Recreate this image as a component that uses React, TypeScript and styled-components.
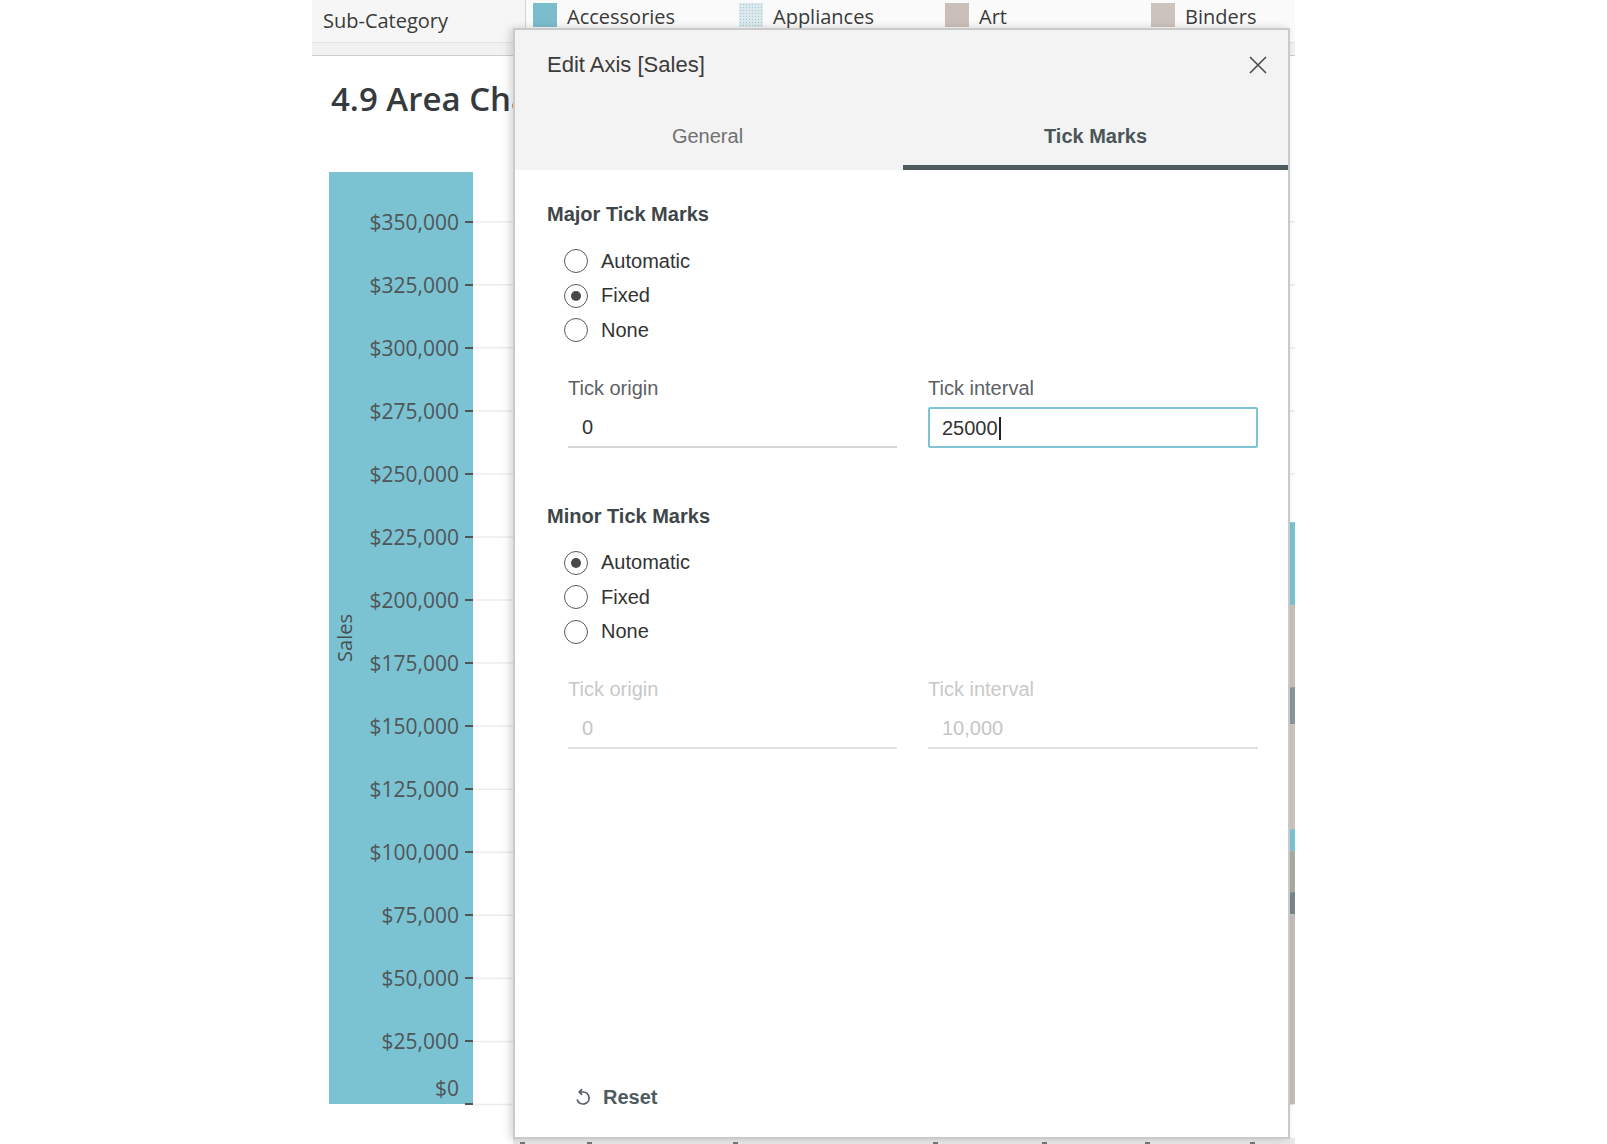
import React from "react";
import styled, { createGlobalStyle } from "styled-components";

const GlobalStyle = createGlobalStyle`
  html, body { margin: 0; padding: 0; background: #ffffff; }
  body { font-family: "Open Sans", "Liberation Sans", sans-serif; }
  *, *::before, *::after { box-sizing: border-box; }
`;

const Page = styled.div`
  position: relative;
  width: 1607px;
  height: 1144px;
  overflow: hidden;
  background: #ffffff;
`;

/* ---------- worksheet behind the dialog ---------- */

const Sheet = styled.div`
  margin-left: 312px;
  width: 983px;
  height: 100%;
  display: flex;
  flex-direction: column;
  font-family: "Open Sans", sans-serif;
  color: #333;
`;

const HeaderRow = styled.div`
  display: flex;
  height: 43px;
  flex-shrink: 0;
  background: #f6f6f6;
  border-bottom: 1px solid #e3e3e3;
`;

const FieldCell = styled.div`
  width: 214px;
  flex-shrink: 0;
  padding: 7px 0 0 11px;
  font-size: 20px;
  line-height: 28px;
  color: #3a3a3a;
  border-right: 1px solid #d4d4d4;
`;

const Legend = styled.div`
  display: flex;
  flex: 1;
  min-width: 0;
  overflow: hidden;
  padding: 3px 0 0 7px;
  background: #fafafa;
`;

const LegendItem = styled.div`
  width: 206px;
  height: 24px;
  flex-shrink: 0;
  display: flex;
  align-items: center;
  gap: 10px;
  padding-top: 2px;
  font-size: 20px;
  color: #3a3a3a;
`;

const Swatch = styled.span<{ $color: string; $dotted?: boolean }>`
  width: 24px;
  height: 24px;
  flex-shrink: 0;
  margin-top: -2px;
  background-color: ${(p) => p.$color};
  background-image: ${(p) =>
    p.$dotted
      ? "radial-gradient(circle, rgba(140,190,205,0.7) 0.8px, transparent 1px)"
      : "none"};
  background-size: 3px 3px;
`;

const Band = styled.div`
  height: 13px;
  flex-shrink: 0;
  background: #f1f1f1;
  border-bottom: 1px solid #cdcdcd;
`;

const Title = styled.h1`
  margin: 23px 0 0 19px;
  font-size: 33px;
  line-height: 40px;
  font-weight: 600;
  color: #343a3d;
  white-space: nowrap;
`;

const ChartRow = styled.div`
  margin-top: 53px;
  display: flex;
  flex: 1;
  min-height: 0;
`;

const AxisColumn = styled.div`
  margin-left: 17px;
  width: 144px;
  height: 932px;
  flex-shrink: 0;
  display: flex;
  background: #7bc3d2;
`;

const AxisTitle = styled.div`
  width: 30px;
  display: flex;
  align-items: center;
  justify-content: center;
`;

const AxisTitleText = styled.span`
  writing-mode: vertical-rl;
  transform: rotate(180deg);
  font-size: 20px;
  color: #4a4f52;
`;

const TickList = styled.div`
  flex: 1;
  display: flex;
  flex-direction: column;
  padding-top: 18.2px;
`;

const TickRow = styled.div<{ $zero?: boolean }>`
  height: ${(p) => (p.$zero ? "31.5px" : "63.06px")};
  display: flex;
  align-items: ${(p) => (p.$zero ? "flex-end" : "center")};
  justify-content: flex-end;
  font-size: 21px;
  line-height: 28px;
  color: #4f5557;
`;

const TickLabel = styled.span<{ $zero?: boolean }>`
  margin-right: 6px;
  margin-bottom: ${(p) => (p.$zero ? "2px" : "0")};
`;

const TickMark = styled.span<{ $zero?: boolean }>`
  width: 8px;
  height: 2px;
  background: #4f5557;
  margin-bottom: ${(p) => (p.$zero ? "-1px" : "0")};
`;

const PlotArea = styled.div`
  flex: 1;
  height: 972px;
`;

/* ---------- dialog ---------- */

const Dialog = styled.div`
  position: absolute;
  left: 513px;
  top: 28px;
  width: 777px;
  height: 1111px;
  display: flex;
  flex-direction: column;
  background: #ffffff;
  border: 2px solid #cacaca;
  box-shadow: -3px 0 8px rgba(0, 0, 0, 0.16);
  font-family: "Liberation Sans", Arial, sans-serif;
`;

const DialogHeader = styled.div`
  background: #f3f3f3;
`;

const TitleBar = styled.div`
  height: 68px;
  display: flex;
  align-items: center;
  justify-content: space-between;
  padding: 2px 21px 0 32px;
`;

const DialogTitle = styled.span`
  font-size: 22px;
  color: #3b3b3b;
`;

const CloseButton = styled.button`
  width: 18px;
  height: 18px;
  padding: 0;
  border: none;
  background: none;
  display: flex;
  cursor: pointer;
`;

const Tabs = styled.div`
  height: 72px;
  display: flex;
`;

const Tab = styled.div<{ $active?: boolean }>`
  flex: 1;
  display: flex;
  align-items: center;
  justify-content: center;
  padding-top: 4px;
  font-size: 20px;
  font-weight: ${(p) => (p.$active ? 700 : 400)};
  color: ${(p) => (p.$active ? "#4a5558" : "#6e7173")};
  box-shadow: ${(p) => (p.$active ? "inset 0 -5px 0 #4f5b5f" : "none")};
  margin-left: ${(p) => (p.$active ? "3px" : "0")};
`;

const Body = styled.div`
  flex: 1;
  display: flex;
  flex-direction: column;
  padding: 30px 29px 0 32px;
`;

const Heading = styled.div<{ $gap?: number }>`
  margin-top: ${(p) => p.$gap ?? 0}px;
  font-size: 20px;
  line-height: 28px;
  font-weight: 700;
  color: #3e4649;
`;

const RadioGroup = styled.div`
  margin: 16px 0 0 17px;
  display: flex;
  flex-direction: column;
`;

const RadioRow = styled.label`
  height: 34.5px;
  display: flex;
  align-items: center;
  gap: 13px;
  font-size: 20px;
  color: #333;
`;

const RadioCircle = styled.span<{ $checked?: boolean }>`
  width: 24px;
  height: 24px;
  border-radius: 50%;
  border: 1.5px solid #5a5a5a;
  display: flex;
  align-items: center;
  justify-content: center;
  &::after {
    content: "";
    width: 10px;
    height: 10px;
    border-radius: 50%;
    background: #4a4a4a;
    display: ${(p) => (p.$checked ? "block" : "none")};
  }
`;

const FieldGrid = styled.div`
  margin: 28px 0 0 21px;
  display: grid;
  grid-template-columns: 329px 330px;
  column-gap: 31px;
`;

const Field = styled.div`
  display: flex;
  flex-direction: column;
`;

const FieldLabel = styled.div<{ $disabled?: boolean }>`
  font-size: 20px;
  line-height: 24px;
  color: ${(p) => (p.$disabled ? "#c9c9c9" : "#5d6163")};
`;

const InputBox = styled.div<{ $focused?: boolean; $disabled?: boolean }>`
  margin-top: 7px;
  height: 41px;
  display: flex;
  align-items: center;
  padding-top: 2px;
  font-size: 20px;
  color: ${(p) => (p.$disabled ? "#c6c6c6" : "#333")};
  padding-left: ${(p) => (p.$focused ? "12px" : "14px")};
  padding-right: 12px;
  border: ${(p) => (p.$focused ? "2px solid #7fc4d5" : "none")};
  border-bottom: ${(p) =>
    p.$focused ? "2px solid #7fc4d5" : p.$disabled ? "2px solid #e2e2e2" : "2px solid #d6d6d6"};
  border-radius: ${(p) => (p.$focused ? "2px" : "0")};
`;

const Caret = styled.span`
  width: 2px;
  height: 23px;
  margin-left: 1px;
  background: #222;
`;

const ResetButton = styled.button`
  margin: auto 0 26px 28px;
  align-self: flex-start;
  height: 28px;
  display: flex;
  align-items: center;
  gap: 12px;
  padding: 0;
  border: none;
  background: none;
  font-family: "Liberation Sans", Arial, sans-serif;
  font-size: 20px;
  font-weight: 700;
  color: #4f5b5f;
  cursor: pointer;
`;

const tickValues = [
  "$350,000", "$325,000", "$300,000", "$275,000", "$250,000", "$225,000", "$200,000",
  "$175,000", "$150,000", "$125,000", "$100,000", "$75,000", "$50,000", "$25,000",
];

const gridYs = Array.from({ length: 15 }, (_, i) => 49.7 + i * 63.06);

const areaBands = [
  { top: 350, bottom: 433, color: "#7bc3d2" },
  { top: 433, bottom: 515, color: "#c9bfb9" },
  { top: 515, bottom: 552, color: "#89969a" },
  { top: 552, bottom: 657, color: "#cdc4be" },
  { top: 657, bottom: 679, color: "#7bc3d2" },
  { top: 679, bottom: 720, color: "#a9aaa4" },
  { top: 720, bottom: 742, color: "#7a8789" },
  { top: 742, bottom: 932, color: "#c4bcb6" },
];

const axisMarks = [47, 114, 260, 460, 569, 672, 777];

function AreaPlot() {
  return (
    <svg width="822" height="972" viewBox="0 0 822 972">
      {gridYs.map((y) => (
        <line key={y} x1="0" x2="822" y1={y} y2={y} stroke="#ececec" strokeWidth="1.5" />
      ))}
      {areaBands.map((b) => (
        <polygon
          key={b.top}
          points={`80,${b.top + 60} 500,${b.top + 20} 822,${b.top} 822,${b.bottom} 500,${b.bottom + 20} 80,${b.bottom + 60}`}
          fill={b.color}
        />
      ))}
      <rect x="40" y="966" width="782" height="6" fill="#e8e8e8" />
      {axisMarks.map((x) => (
        <rect key={x} x={x} y="970" width="5" height="2" fill="#777" />
      ))}
    </svg>
  );
}

function CloseIcon() {
  return (
    <svg width="18" height="18" viewBox="0 0 18 18">
      <path d="M1 1 L17 17 M17 1 L1 17" stroke="#4a4a4a" strokeWidth="1.6" fill="none" />
    </svg>
  );
}

function ResetIcon() {
  return (
    <svg width="16" height="19" viewBox="0 0 16 19">
      <path
        d="M4.5 4 L8 4 A6 6 0 1 1 2.4 12.1"
        stroke="#4f5b5f"
        strokeWidth="1.7"
        fill="none"
        strokeLinecap="round"
      />
      <path d="M6.6 1.6 L4.2 4 L6.6 6.4" stroke="#4f5b5f" strokeWidth="1.7" fill="none" strokeLinecap="round" strokeLinejoin="round" />
    </svg>
  );
}

type RadioOpt = { label: string; checked?: boolean };

function RadioList({ options }: { options: RadioOpt[] }) {
  return (
    <RadioGroup>
      {options.map((o) => (
        <RadioRow key={o.label}>
          <RadioCircle $checked={o.checked} />
          {o.label}
        </RadioRow>
      ))}
    </RadioGroup>
  );
}

export default function App() {
  return (
    <Page>
      <GlobalStyle />
      <Sheet>
        <HeaderRow>
          <FieldCell>Sub-Category</FieldCell>
          <Legend>
            <LegendItem>
              <Swatch $color="#7bbdcc" />
              Accessories
            </LegendItem>
            <LegendItem>
              <Swatch $color="#dbe8ec" $dotted />
              Appliances
            </LegendItem>
            <LegendItem>
              <Swatch $color="#cbc0b9" />
              Art
            </LegendItem>
            <LegendItem>
              <Swatch $color="#cdc3bd" />
              Binders
            </LegendItem>
          </Legend>
        </HeaderRow>
        <Band />
        <Title>4.9 Area Chart</Title>
        <ChartRow>
          <AxisColumn>
            <AxisTitle>
              <AxisTitleText>Sales</AxisTitleText>
            </AxisTitle>
            <TickList>
              {tickValues.map((t) => (
                <TickRow key={t}>
                  <TickLabel>{t}</TickLabel>
                  <TickMark />
                </TickRow>
              ))}
              <TickRow $zero>
                <TickLabel $zero>$0</TickLabel>
                <TickMark $zero />
              </TickRow>
            </TickList>
          </AxisColumn>
          <PlotArea>
            <AreaPlot />
          </PlotArea>
        </ChartRow>
      </Sheet>

      <Dialog>
        <DialogHeader>
          <TitleBar>
            <DialogTitle>Edit Axis [Sales]</DialogTitle>
            <CloseButton aria-label="Close">
              <CloseIcon />
            </CloseButton>
          </TitleBar>
          <Tabs>
            <Tab>General</Tab>
            <Tab $active>Tick Marks</Tab>
          </Tabs>
        </DialogHeader>
        <Body>
          <Heading>Major Tick Marks</Heading>
          <RadioList
            options={[{ label: "Automatic" }, { label: "Fixed", checked: true }, { label: "None" }]}
          />
          <FieldGrid>
            <Field>
              <FieldLabel>Tick origin</FieldLabel>
              <InputBox>0</InputBox>
            </Field>
            <Field>
              <FieldLabel>Tick interval</FieldLabel>
              <InputBox $focused>
                25000
                <Caret />
              </InputBox>
            </Field>
          </FieldGrid>

          <Heading $gap={54}>Minor Tick Marks</Heading>
          <RadioList
            options={[{ label: "Automatic", checked: true }, { label: "Fixed" }, { label: "None" }]}
          />
          <FieldGrid>
            <Field>
              <FieldLabel $disabled>Tick origin</FieldLabel>
              <InputBox $disabled>0</InputBox>
            </Field>
            <Field>
              <FieldLabel $disabled>Tick interval</FieldLabel>
              <InputBox $disabled>10,000</InputBox>
            </Field>
          </FieldGrid>

          <ResetButton>
            <ResetIcon />
            Reset
          </ResetButton>
        </Body>
      </Dialog>
    </Page>
  );
}
